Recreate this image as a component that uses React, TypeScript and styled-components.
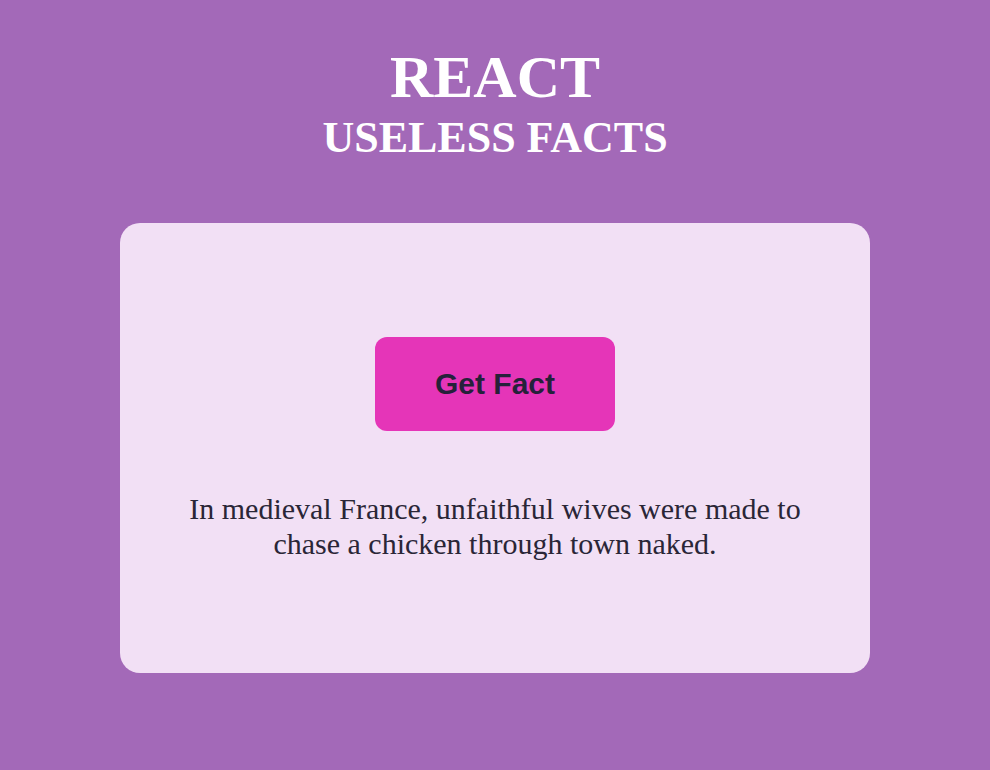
import React from "react"
import styled, { createGlobalStyle } from "styled-components"

const GlobalStyle = createGlobalStyle`
	body {
		margin: 0;
		background: #a369b8;
		font-family: "Liberation Serif", "Times New Roman", serif;
	}
`

const Page = styled.main`
	display: flex;
	flex-direction: column;
	align-items: center;
	padding-top: 43px;
	min-height: 770px;
	box-sizing: border-box;
`

const Header = styled.header`
	display: flex;
	flex-direction: column;
	align-items: center;
	color: #ffffff;
	margin-bottom: 60px;
`

const Title = styled.h1<{ size: number }>`
	margin: 0;
	font-size: ${props => props.size}px;
	font-weight: 700;
	line-height: normal;
`

const Card = styled.section`
	width: 750px;
	height: 450px;
	box-sizing: border-box;
	background: #f2e0f5;
	border-radius: 20px;
	display: flex;
	flex-direction: column;
	align-items: center;
	padding-top: 114px;
	gap: 60px;
`

const Button = styled.button`
	width: 240px;
	height: 94px;
	border: none;
	border-radius: 12px;
	background: #e535b8;
	color: #25213a;
	font-family: "Liberation Sans", Arial, sans-serif;
	font-weight: 700;
	font-size: 30px;
	cursor: pointer;
`

const Fact = styled.p`
	margin: 0;
	max-width: 650px;
	text-align: center;
	font-size: 30px;
	line-height: 35px;
	color: #2a2637;
`

const App = (): JSX.Element => (
	<>
		<GlobalStyle />
		<Page>
			<Header>
				<Title size={60}>REACT</Title>
				<Title size={44}>USELESS FACTS</Title>
			</Header>
			<Card>
				<Button>Get Fact</Button>
				<Fact>
					In medieval France, unfaithful wives were made to chase a chicken through town naked.
				</Fact>
			</Card>
		</Page>
	</>
)

export default App
